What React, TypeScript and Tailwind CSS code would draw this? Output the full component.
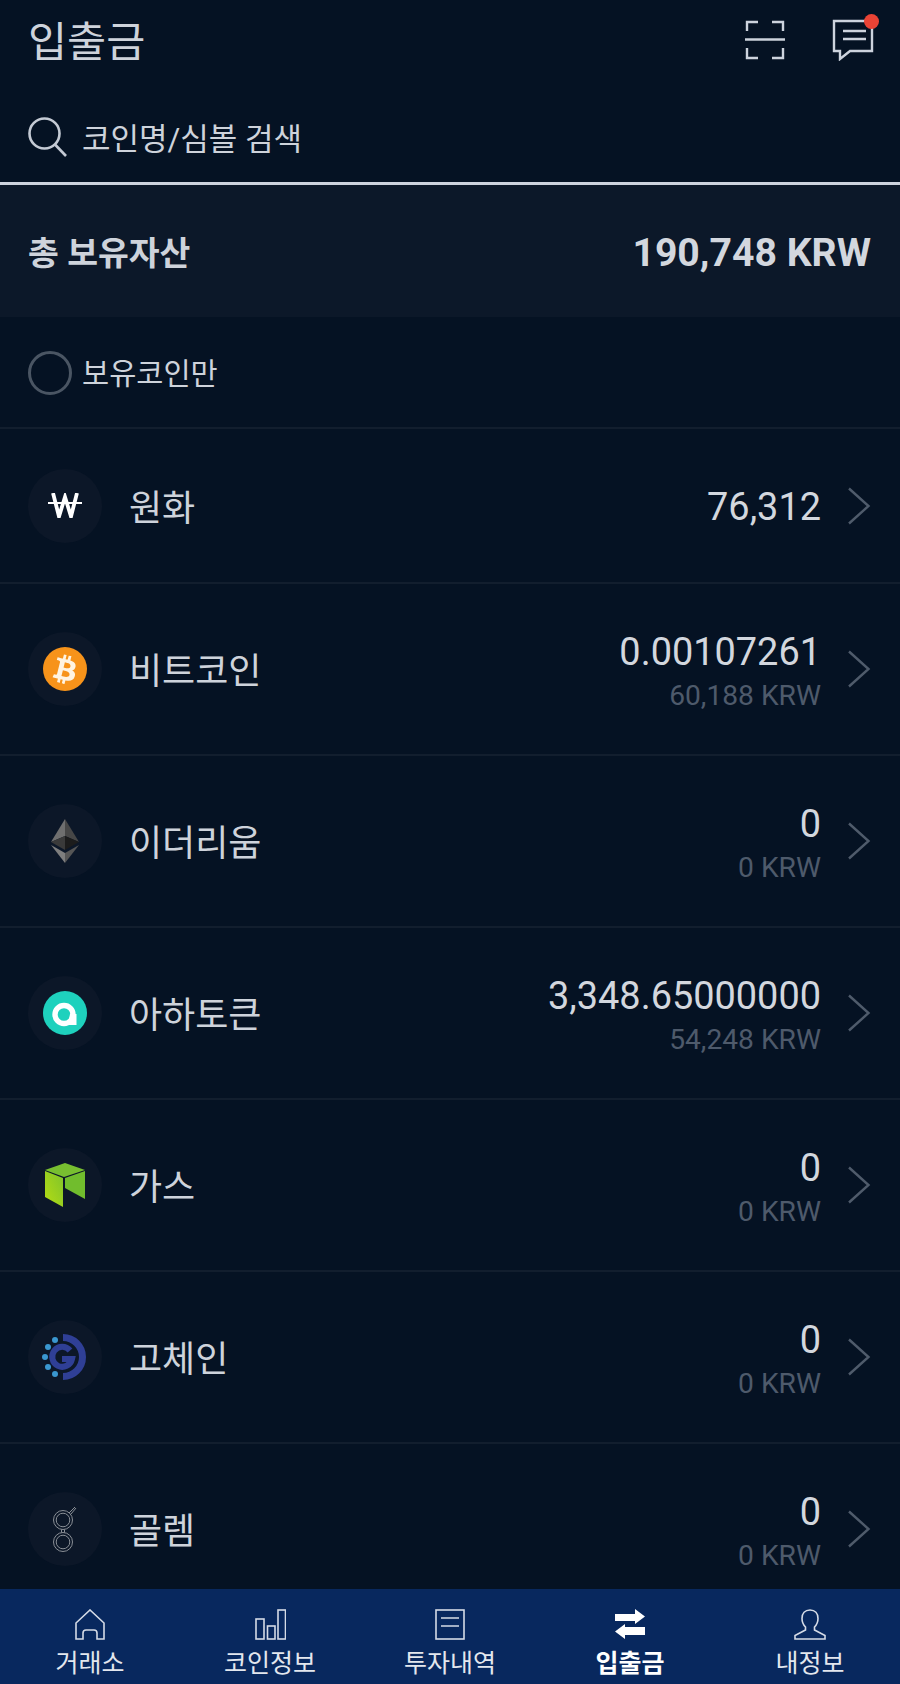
import { FaBtc } from 'react-icons/fa'
import type { ReactNode } from 'react'

const sans = "font-['Roboto','Noto_Sans_CJK_KR',sans-serif]"

function Won() {
  return (
    <svg width="34" height="25" viewBox="0 0 34 25" fill="none" stroke="#fff" strokeWidth="3.800">
      <path d="M5 0l6 23.500L17 4l6 19.500L29 0" />
      <path d="M0 10h34" strokeWidth="2.200" />
    </svg>
  )
}

function Btc() {
  return (
    <div className="flex h-[44px] w-[44px] items-center justify-center rounded-full bg-[#f7931a]">
      <FaBtc size={29} className="rotate-[14deg] text-[#fff4e2]" />
    </div>
  )
}

function Eth() {
  return (
    <svg width="28" height="44" viewBox="0 0 28 44">
      <path d="M14 0L0 23l14-6z" fill="#6f6f6f" />
      <path d="M14 0l14 23-14-6z" fill="#474747" />
      <path d="M14 17L0 23l14 8z" fill="#3a3a3a" />
      <path d="M14 17l14 6-14 8z" fill="#1c1c1c" />
      <path d="M0 26l14 18v-10z" fill="#7e7e7e" />
      <path d="M28 26L14 44v-10z" fill="#565656" />
    </svg>
  )
}

function Aha() {
  return (
    <svg width="44" height="44" viewBox="0 0 44 44">
      <circle cx="22" cy="22" r="22" fill="#1ed1bd" />
      <circle cx="21" cy="23.500" r="9" fill="none" stroke="#fff" strokeWidth="5.400" />
      <path d="M27 23h6.500v11H25z" fill="#fff" />
    </svg>
  )
}

function Neo() {
  return (
    <svg width="40" height="44" viewBox="0 0 40 44">
      <defs>
        <linearGradient id="neoLeft" x1="0" y1="1" x2="1" y2="0">
          <stop offset="0" stopColor="#b5dc12" />
          <stop offset="1" stopColor="#7fc42c" />
        </linearGradient>
      </defs>
      <path d="M20 0l20 7-21 7L0 7z" fill="#78bf30" />
      <path d="M0 8l18 7v29L0 34z" fill="url(#neoLeft)" />
      <path d="M20 15l20-7v28l-20-11z" fill="#71bd2d" />
    </svg>
  )
}

function Gochain() {
  return (
    <svg width="46" height="46" viewBox="0 0 46 46" fill="none">
      <g fill="#3a97d0">
        <circle cx="13" cy="6" r="3" />
        <circle cx="6" cy="13" r="3" />
        <circle cx="3" cy="23" r="3" />
        <circle cx="6" cy="33" r="3" />
        <circle cx="13" cy="40" r="3" />
      </g>
      <path d="M21 3.500a19.500 19.500 0 0 1 0 39" stroke="#2f3f96" strokeWidth="7" />
      <path d="M28 16.500a10 10 0 1 0 2 8.500H20" stroke="#2f3f96" strokeWidth="6" />
    </svg>
  )
}

function Golem() {
  return (
    <svg width="24" height="46" viewBox="0 0 24 46" fill="none" stroke="#8a8f96" strokeWidth="1">
      <circle cx="10" cy="14" r="9.500" />
      <circle cx="10" cy="14" r="6.800" />
      <circle cx="10" cy="36" r="9.500" />
      <circle cx="10" cy="36" r="6.800" />
      <path d="M8.500 23.500v3M11.500 23.500v3M16 7l6-6M18 8l5-6" />
    </svg>
  )
}

function Chevron() {
  return (
    <svg width="24" height="38" viewBox="0 0 24 38" fill="none" stroke="#4f5b6b" strokeWidth="2.400">
      <path d="M2 1.500L21.500 19 2 36.500" />
    </svg>
  )
}

type Coin = { name: string; icon: ReactNode; amount: string; krw?: string }

const coins: Coin[] = [
  { name: '원화', icon: <Won />, amount: '76,312' },
  { name: '비트코인', icon: <Btc />, amount: '0.00107261', krw: '60,188 KRW' },
  { name: '이더리움', icon: <Eth />, amount: '0', krw: '0 KRW' },
  { name: '아하토큰', icon: <Aha />, amount: '3,348.65000000', krw: '54,248 KRW' },
  { name: '가스', icon: <Neo />, amount: '0', krw: '0 KRW' },
  { name: '고체인', icon: <Gochain />, amount: '0', krw: '0 KRW' },
  { name: '골렘', icon: <Golem />, amount: '0', krw: '0 KRW' },
]

function CoinRow({ coin, first }: { coin: Coin; first: boolean }) {
  return (
    <div className={`flex shrink-0 items-center border-b-2 border-[#121e2e] pl-[28px] pr-[29px] ${first ? 'h-[155px]' : 'h-[172px]'}`}>
      <div className="flex h-[74px] w-[74px] shrink-0 items-center justify-center rounded-full bg-[#0c1728]">{coin.icon}</div>
      <span className="ml-[27px] pt-[6px] text-[36px] leading-none text-[#ced3db]">{coin.name}</span>
      <div className={`ml-auto mr-[26px] flex flex-col items-end ${coin.krw ? 'pt-[7px]' : 'pt-[2px]'}`}>
        <span className="text-[37.900px] leading-[44px] text-[#d3d7de]">{coin.amount}</span>
        {coin.krw && <span className="mt-[3px] text-[28.200px] leading-[38px] text-[#4e5a6b]">{coin.krw}</span>}
      </div>
      <Chevron />
    </div>
  )
}

const navItems: { label: string; active?: boolean; icon: ReactNode }[] = [
  {
    label: '거래소',
    icon: (
      <svg width="30" height="31" viewBox="0 0 30 31" fill="none" stroke="#d5dbe6" strokeWidth="1.600">
        <path d="M1 30V14L15 1l14 13v16h-7v-6q0-3-3-3h-8q-3 0-3 3v6z" />
      </svg>
    ),
  },
  {
    label: '코인정보',
    icon: (
      <svg width="31" height="31" viewBox="0 0 31 31" fill="none" stroke="#d5dbe6" strokeWidth="1.600">
        <rect x="1" y="10" width="8" height="20" />
        <rect x="12.500" y="17" width="7.500" height="13" />
        <rect x="23" y="1" width="7.500" height="29" />
      </svg>
    ),
  },
  {
    label: '투자내역',
    icon: (
      <svg width="30" height="31" viewBox="0 0 30 31" fill="none" stroke="#d5dbe6" strokeWidth="1.600">
        <rect x="1" y="1" width="28" height="29" />
        <path d="M6 9h18M6 17h18" />
      </svg>
    ),
  },
  {
    label: '입출금',
    active: true,
    icon: (
      <svg width="30" height="31" viewBox="0 0 30 31" fill="#fff">
        <path d="M0 5h20V0l10 7.500L20 15v-3H0z" />
        <path d="M30 18H10v-3L0 22.500 10 30v-4h20z" />
      </svg>
    ),
  },
  {
    label: '내정보',
    icon: (
      <svg width="32" height="31" viewBox="0 0 32 31" fill="none" stroke="#d5dbe6" strokeWidth="1.600">
        <path d="M16 1c-5 0-8 3.500-8 8.500 0 4 2 7 3.500 8.500v3L1 26.500V30h30v-3.500L20.500 21v-3c1.500-1.500 3.500-4.500 3.500-8.500C24 4.500 21 1 16 1z" />
      </svg>
    ),
  },
]

export default function App() {
  return (
    <div className={`flex h-[1684px] w-[900px] flex-col overflow-hidden bg-[#051223] ${sans}`}>
      <header className="flex h-[84px] shrink-0 items-center justify-between pl-[28px] pr-[26px]">
        <h1 className="pt-[2px] text-[42.500px] font-normal leading-none text-[#ced3db]">입출금</h1>
        <div className="mb-[4px] flex items-center gap-[47px]">
          <svg width="40" height="40" viewBox="0 0 40 40" fill="none" stroke="#cdd3dd" strokeWidth="2.400">
            <path d="M13 2H2v9M27 2h11v9M13 38H2V28M27 38h11V28" />
            <path d="M0 19.500h40" />
          </svg>
          <div className="relative h-[42px] w-[42px]">
            <svg width="42" height="42" viewBox="0 0 42 42" fill="none" stroke="#cdd3dd" strokeWidth="2.400">
              <path d="M2 2h38v30H18L8 40v-8H2z" />
              <path d="M11 12h23M11 20h23" />
            </svg>
            <span className="absolute -right-[5px] -top-[5px] h-[15px] w-[15px] rounded-full bg-[#ea4335]" />
          </div>
        </div>
      </header>

      <div className="flex h-[98px] shrink-0 items-center pl-[28px] pt-[8px]">
        <svg width="39" height="40" viewBox="0 0 39 40" fill="none" stroke="#c4cad4" strokeWidth="2.600">
          <circle cx="16.500" cy="16.500" r="15" />
          <path d="M27 27.500L38 39" />
        </svg>
        <span className="ml-[15px] pt-[4px] text-[31px] leading-none text-[#ced3db]">코인명/심볼 검색</span>
      </div>

      <section className="flex h-[135px] shrink-0 items-center justify-between border-t-[3px] border-[#cdd3dd] bg-[#0c1829] pl-[28px] pr-[29px] pt-[6px]">
        <span className="text-[33.500px] font-bold leading-none text-[#ced3db]">총 보유자산</span>
        <span className="text-[39.200px] font-bold leading-none text-[#d3d7de]">190,748 KRW</span>
      </section>

      <div className="flex h-[112px] shrink-0 items-center border-b-2 border-[#121e2e] pl-[28px] pt-[2px]">
        <span className="h-[44px] w-[44px] rounded-full border-[3px] border-[#4a5563]" />
        <span className="ml-[10px] pt-[4px] text-[29.500px] leading-none text-[#ced3db]">보유코인만</span>
      </div>

      <div className="flex min-h-0 flex-1 flex-col overflow-hidden">
        {coins.map((coin, i) => (
          <CoinRow key={coin.name} coin={coin} first={i === 0} />
        ))}
      </div>

      <nav className="grid h-[95px] shrink-0 grid-cols-5 bg-[#08285e]">
        {navItems.map((item) => (
          <div key={item.label} className="flex flex-col items-center pt-[20px]">
            {item.icon}
            <span className={`mt-[9px] text-[25px] leading-[30px] ${item.active ? 'font-bold text-white' : 'text-[#e3e7ee]'}`}>{item.label}</span>
          </div>
        ))}
      </nav>
    </div>
  )
}
